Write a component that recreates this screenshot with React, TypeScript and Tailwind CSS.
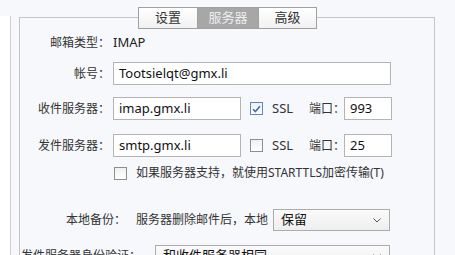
import { ReactNode } from "react";

const font = { fontFamily: '"Noto Sans", "Noto Sans CJK SC", sans-serif' };

function Box({ children, className = "" }: { children?: ReactNode; className?: string }) {
  return (
    <div
      className={`flex h-[23px] shrink-0 items-center border border-[#b4b4b4] bg-white px-[5px] text-[13px] text-[#111] ${className}`}
    >
      {children}
    </div>
  );
}

function Check({ on }: { on?: boolean }) {
  return (
    <span
      className={`flex h-[13px] w-[13px] shrink-0 items-center justify-center border bg-gradient-to-b from-[#f0f0f0] to-white ${
        on ? "border-[#5b87c2]" : "border-[#8e8e8e]"
      }`}
    >
      {on ? (
        <svg width="9" height="8" viewBox="0 0 9 8">
          <path d="M1 4.2 L3.4 6.6 L8 1.2" fill="none" stroke="#3b6fb3" strokeWidth="1.6" />
        </svg>
      ) : null}
    </span>
  );
}

function Select({ value, className = "" }: { value: string; className?: string }) {
  return (
    <div
      className={`flex h-[22px] shrink-0 items-center justify-between border border-[#acacac] bg-gradient-to-b from-[#fbfbfb] to-[#eeeeee] pl-[7px] pr-[8px] text-[13px] text-[#111] ${className}`}
    >
      <span className="whitespace-nowrap">{value}</span>
      <svg width="8" height="5" viewBox="0 0 8 5">
        <path d="M0.5 0.5 L4 4 L7.5 0.5" fill="none" stroke="#555" strokeWidth="1" />
      </svg>
    </div>
  );
}

export default function App() {
  return (
    <div
      className="relative h-[255px] w-[455px] overflow-hidden whitespace-nowrap bg-[#f7f8fc] text-[12px] text-[#333]"
      style={font}
    >
      <div className="absolute left-0 top-[16px] h-[260px] w-[11px] border-r border-[#cfcfcf] bg-white" />

      <div className="absolute left-[19px] top-[17px] h-[260px] w-[416px] border border-[#c4c4c4]" />

      <div className="absolute left-[138px] top-[7px] flex h-[22px] text-[13px]">
        <div className="flex w-[60px] items-center justify-center border border-[#a0a0a0] bg-gradient-to-b from-white to-[#f1f1f1] text-[#333]">
          设置
        </div>
        <div className="flex w-[60px] items-center justify-center border-y border-[#a0a0a0] bg-[#a7a7a7] text-[#eeeeee]">
          服务器
        </div>
        <div className="flex w-[59px] items-center justify-center border border-[#a0a0a0] bg-gradient-to-b from-white to-[#f1f1f1] text-[#333]">
          高级
        </div>
      </div>

      <div className="relative flex flex-col pt-[33px]">
        <div className="flex h-[20px] items-center">
          <span className="w-[113px] pr-[3px] text-right">邮箱类型：</span>
          <span className="text-[13px] text-[#222]">IMAP</span>
        </div>

        <div className="mt-[9px] flex items-center">
          <span className="w-[113px] pr-[3px] text-right">帐号：</span>
          <Box className="w-[278px]">Tootsielqt@gmx.li</Box>
        </div>

        <div className="mt-[12px] flex items-center">
          <span className="w-[113px] pr-[3px] text-right">收件服务器：</span>
          <Box className="w-[128px]">imap.gmx.li</Box>
          <span className="ml-[9px]">
            <Check on />
          </span>
          <span className="ml-[9px] w-[37px] text-[13px]">SSL</span>
          <span className="w-[35px]">端口：</span>
          <Box className="w-[48px]">993</Box>
        </div>

        <div className="mt-[14px] flex items-center">
          <span className="w-[113px] pr-[3px] text-right">发件服务器：</span>
          <Box className="w-[128px]">smtp.gmx.li</Box>
          <span className="ml-[9px]">
            <Check />
          </span>
          <span className="ml-[9px] w-[37px] text-[13px]">SSL</span>
          <span className="w-[35px]">端口：</span>
          <Box className="w-[48px]">25</Box>
        </div>

        <div className="ml-[114px] mt-[7px] flex items-center">
          <Check />
          <span className="ml-[9px]">如果服务器支持，就使用STARTTLS加密传输(T)</span>
        </div>

        <div className="mt-[27px] flex items-center">
          <span className="ml-[66px] w-[70px]">本地备份：</span>
          <span>服务器删除邮件后，本地</span>
          <Select value="保留" className="ml-[5px] w-[117px]" />
        </div>

        <div className="mt-[14px] flex items-center">
          <span className="ml-[21px] w-[134px]">发件服务器身份验证：</span>
          <Select value="和收件服务器相同" className="w-[235px]" />
        </div>
      </div>
    </div>
  );
}
